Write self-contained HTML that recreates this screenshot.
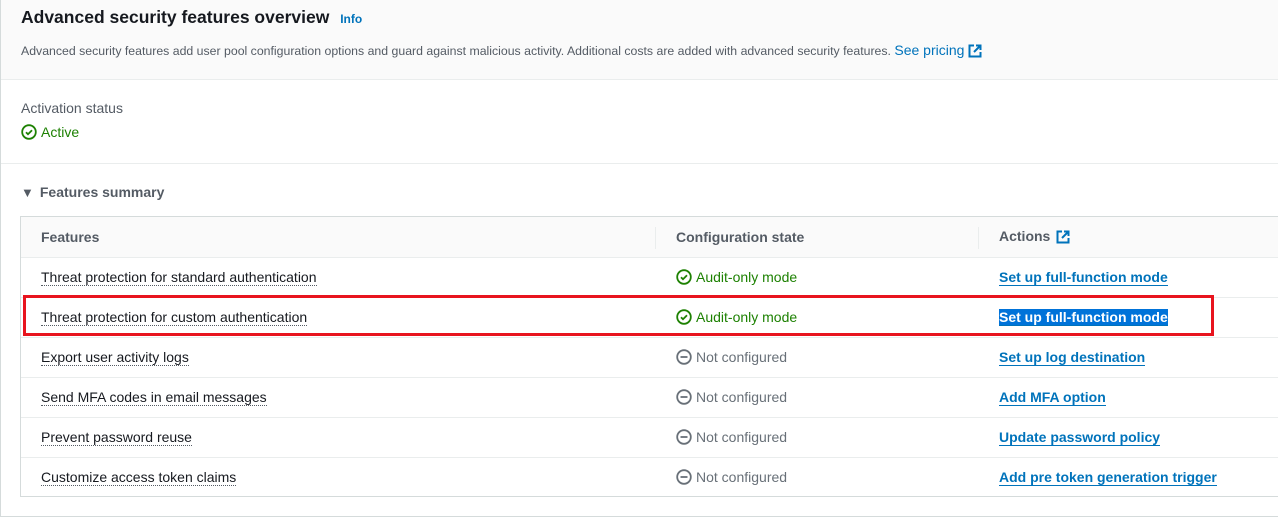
<!DOCTYPE html>
<html><head><style>
*{box-sizing:border-box;margin:0;padding:0}
body{width:1278px;height:518px;background:#fff;font-family:"Liberation Sans",sans-serif;color:#16191f;position:relative;overflow:hidden}
.outer{position:absolute;left:0;top:-2px;width:1290px;height:519px;border:1px solid #d5dbdb;border-top:none}
.hdr{position:absolute;left:1px;top:0;width:1290px;height:80px;background:#fafafa;border-bottom:1px solid #eaeded}
h1{position:absolute;left:21px;top:7px;font-size:17.5px;font-weight:bold}
.info{font-size:12px;color:#0073bb;font-weight:bold;margin-left:6px}
.desc{position:absolute;left:21px;top:42px;font-size:12.3px;color:#545b64}
a{color:#0073bb;text-decoration:none}
.lbl{position:absolute;left:21px;top:100px;font-size:14px;color:#545b64}
.ok{color:#1d8102}
.act{position:absolute;left:21px;top:124px;font-size:14px}
.sep{position:absolute;left:1px;top:163px;width:1290px;border-top:1px solid #eaeded}
.fs{position:absolute;left:21px;top:184px;font-size:14px;font-weight:bold;color:#545b64}
.tbl{position:absolute;left:20px;top:216px;width:1270px;height:281px;border:1px solid #d5dbdb}
.row{position:absolute;left:0;width:1270px;height:40px;border-top:1px solid #eaeded;font-size:14px}
.row span{position:absolute;top:11px;white-space:nowrap}
.c1{left:20px}.c2{left:655px}.c3{left:978px}
.th{background:#fafafa;border-top:none;font-weight:bold;color:#545b64}
.f{border-bottom:1px dotted #545b64}
.l{font-weight:bold;color:#0073bb;border-bottom:1px solid #0073bb}
.nc{color:#687078}
svg{vertical-align:-3px;margin-right:4px}
.red{position:absolute;left:23px;top:295px;width:1191px;height:41px;border:3px solid #e8141e}
.vl{position:absolute;top:10px;height:22px;border-left:1px solid #eaeded}
</style></head><body>
<div class="outer"></div>
<div class="hdr"></div>
<h1>Advanced security features overview <span class="info">Info</span></h1>
<div class="desc">Advanced security features add user pool configuration options and guard against malicious activity. Additional costs are added with advanced security features. <a style="font-size:14px">See pricing <svg width="14" height="14" viewBox="0 0 14 14" style="margin:0"><path d="M6 1.5H1.5v11h11V8M8 1.5h4.5V6M12.5 1.5L6 8" fill="none" stroke="#0073bb" stroke-width="2"/></svg></a></div>
<div class="lbl">Activation status</div>
<div class="act ok"><svg width="16" height="16" viewBox="0 0 16 16"><circle cx="8" cy="8" r="6.8" fill="none" stroke="#1d8102" stroke-width="1.8"/><path d="M5 8.2l2 2 4-4" fill="none" stroke="#1d8102" stroke-width="1.8"/></svg>Active</div>
<div class="sep"></div>
<div class="fs"><span style="font-size:13px;margin-right:6px">&#9660;</span>Features summary</div>
<div class="tbl">
<div class="row th" style="top:0"><span class="c1" style="top:12px">Features</span><div class="vl" style="left:634px"></div><span class="c2" style="top:12px">Configuration state</span><div class="vl" style="left:957px"></div><span class="c3" style="top:11px">Actions <svg width="14" height="14" viewBox="0 0 14 14" style="margin:0 0 0 2px"><path d="M6 1.5H1.5v11h11V8M8 1.5h4.5V6M12.5 1.5L6 8" fill="none" stroke="#0073bb" stroke-width="2"/></svg></span></div>
<div class="row" style="top:40px"><span class="c1 f">Threat protection for standard authentication</span><span class="c2 ok"><svg width="16" height="16" viewBox="0 0 16 16"><circle cx="8" cy="8" r="6.8" fill="none" stroke="#1d8102" stroke-width="1.8"/><path d="M5 8.2l2 2 4-4" fill="none" stroke="#1d8102" stroke-width="1.8"/></svg>Audit-only mode</span><span class="c3 l">Set up full-function mode</span></div>
<div class="row" style="top:80px"><span class="c1 f">Threat protection for custom authentication</span><span class="c2 ok"><svg width="16" height="16" viewBox="0 0 16 16"><circle cx="8" cy="8" r="6.8" fill="none" stroke="#1d8102" stroke-width="1.8"/><path d="M5 8.2l2 2 4-4" fill="none" stroke="#1d8102" stroke-width="1.8"/></svg>Audit-only mode</span><span class="c3 l" style="background:#0073d9;color:#fff">Set up full-function mode</span></div>
<div class="row" style="top:120px"><span class="c1 f">Export user activity logs</span><span class="c2 nc"><svg width="16" height="16" viewBox="0 0 16 16"><circle cx="8" cy="8" r="6.8" fill="none" stroke="#687078" stroke-width="1.8"/><path d="M4.5 8h7" stroke="#687078" stroke-width="1.8"/></svg>Not configured</span><span class="c3 l">Set up log destination</span></div>
<div class="row" style="top:160px"><span class="c1 f">Send MFA codes in email messages</span><span class="c2 nc"><svg width="16" height="16" viewBox="0 0 16 16"><circle cx="8" cy="8" r="6.8" fill="none" stroke="#687078" stroke-width="1.8"/><path d="M4.5 8h7" stroke="#687078" stroke-width="1.8"/></svg>Not configured</span><span class="c3 l">Add MFA option</span></div>
<div class="row" style="top:200px"><span class="c1 f">Prevent password reuse</span><span class="c2 nc"><svg width="16" height="16" viewBox="0 0 16 16"><circle cx="8" cy="8" r="6.8" fill="none" stroke="#687078" stroke-width="1.8"/><path d="M4.5 8h7" stroke="#687078" stroke-width="1.8"/></svg>Not configured</span><span class="c3 l">Update password policy</span></div>
<div class="row" style="top:240px"><span class="c1 f">Customize access token claims</span><span class="c2 nc"><svg width="16" height="16" viewBox="0 0 16 16"><circle cx="8" cy="8" r="6.8" fill="none" stroke="#687078" stroke-width="1.8"/><path d="M4.5 8h7" stroke="#687078" stroke-width="1.8"/></svg>Not configured</span><span class="c3 l">Add pre token generation trigger</span></div>
</div>
<div class="red"></div>
</body></html>
